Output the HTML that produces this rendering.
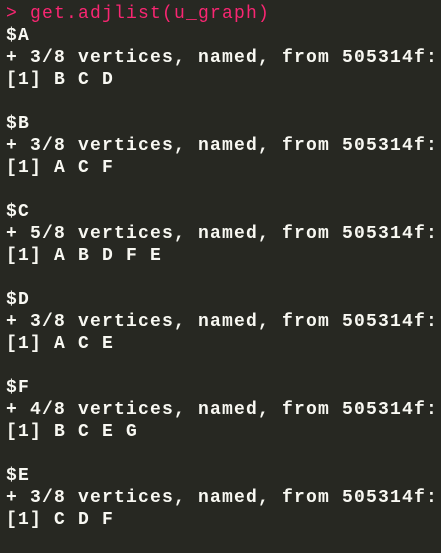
<!DOCTYPE html>
<html><head><style>
html,body{margin:0;padding:0;background:#272822;width:441px;height:553px;overflow:hidden}
pre{margin:0;padding:3px 0 0 6px;font-family:"Liberation Mono",monospace;font-size:18px;font-weight:bold;letter-spacing:1.2px;line-height:22px;color:#f8f8f2}
.p{color:#f92672;font-weight:normal}
</style></head><body><pre><span class="p">&gt; get.adjlist(u_graph)</span>
$A
+ 3/8 vertices, named, from 505314f:
[1] B C D

$B
+ 3/8 vertices, named, from 505314f:
[1] A C F

$C
+ 5/8 vertices, named, from 505314f:
[1] A B D F E

$D
+ 3/8 vertices, named, from 505314f:
[1] A C E

$F
+ 4/8 vertices, named, from 505314f:
[1] B C E G

$E
+ 3/8 vertices, named, from 505314f:
[1] C D F</pre></body></html>
